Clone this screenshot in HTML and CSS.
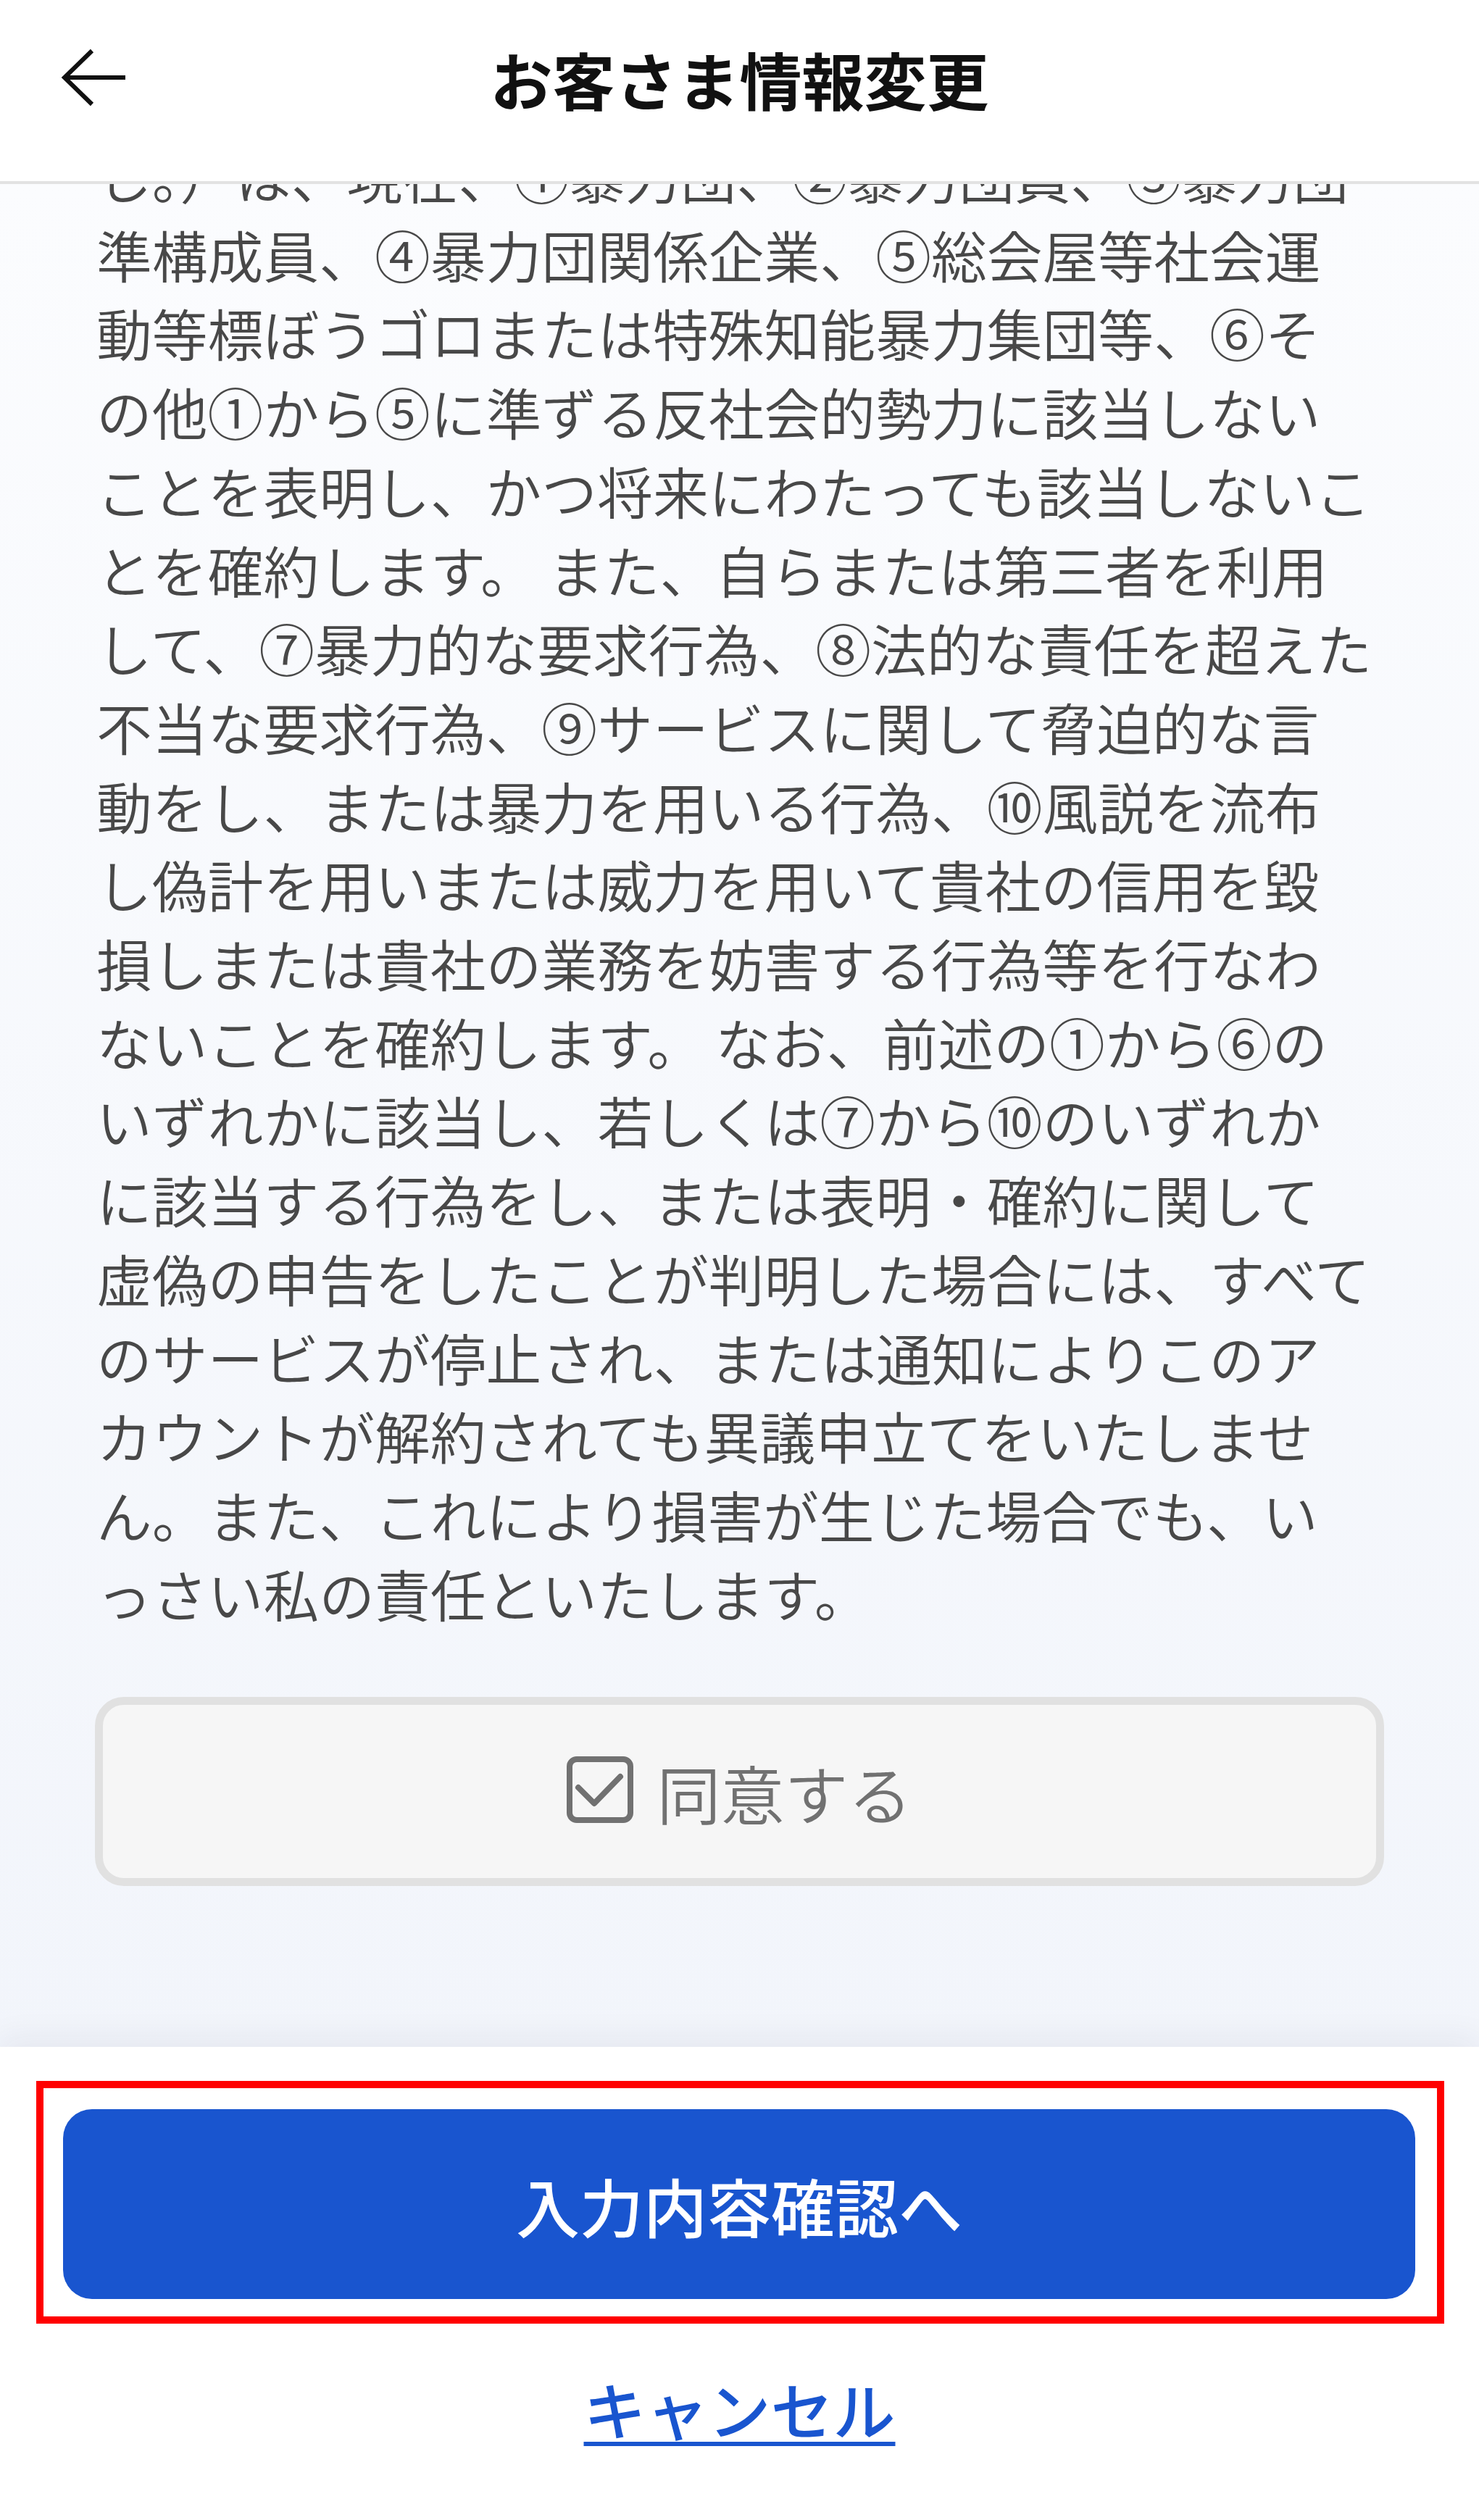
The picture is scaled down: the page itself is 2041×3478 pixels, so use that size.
FILE: index.html
```html
<!DOCTYPE html>
<html lang="ja">
<head>
  <meta charset="UTF-8" />
  <meta name="viewport" content="width=device-width, initial-scale=1" />
  <title>お客さま情報変更</title>
  <link rel="stylesheet" href="styles.css">
</head>
<body>
  <header class="app-header">
    <button class="back-btn" aria-label="戻る">
      <svg width="92" height="82" viewBox="0 0 92 82" fill="none" stroke="#111" stroke-width="6">
        <path d="M89 41H5" />
        <path d="M43 4L5 41L43 78" />
      </svg>
    </button>
    <h1 class="page-title">お客さま情報変更</h1>
  </header>

  <main class="content">
    <p class="terms">
      し。）は、現在、①暴力団、②暴力団員、③暴力団<br>
      準構成員、④暴力団関係企業、⑤総会屋等社会運<br>
      動等標ぼうゴロまたは特殊知能暴力集団等、⑥そ<br>
      の他①から⑤に準ずる反社会的勢力に該当しない<br>
      ことを表明し、かつ将来にわたっても該当しないこ<br>
      とを確約します。 また、自らまたは第三者を利用<br>
      して、⑦暴力的な要求行為、⑧法的な責任を超えた<br>
      不当な要求行為、⑨サービスに関して脅迫的な言<br>
      動をし、または暴力を用いる行為、⑩風説を流布<br>
      し偽計を用いまたは威力を用いて貴社の信用を毀<br>
      損しまたは貴社の業務を妨害する行為等を行なわ<br>
      ないことを確約します。 なお、前述の①から⑥の<br>
      いずれかに該当し、若しくは⑦から⑩のいずれか<br>
      に該当する行為をし、または表明・確約に関して<br>
      虚偽の申告をしたことが判明した場合には、すべて<br>
      のサービスが停止され、または通知によりこのア<br>
      カウントが解約されても異議申立てをいたしませ<br>
      ん。また、これにより損害が生じた場合でも、い<br>
      っさい私の責任といたします。
    </p>

    <label class="agree-box">
      <svg class="agree-icon" width="92" height="92" viewBox="0 0 92 92" fill="none" stroke="#717171" stroke-width="8">
        <rect x="4" y="4" width="84" height="84" rx="10" />
        <path d="M16 43L38 65L74 28" stroke-linecap="round" stroke-linejoin="round" />
      </svg>
      <span class="agree-text">同意する</span>
    </label>
  </main>

  <footer class="action-bar">
    <div class="highlight">
      <button class="btn-primary">入力内容確認へ</button>
    </div>
    <a class="cancel-link" href="#">キャンセル</a>
  </footer>
</body>
</html>
```

FILE: styles.css
```css
body {
  margin: 0;
  font-family: "Noto Sans CJK JP", "Noto Sans", sans-serif;
  background-color: #fff;
  color: #111;
}
/* Header */
.app-header {
  display: grid;
  grid-template-columns: 1fr auto 1fr;
  align-items: start;
  height: 254px;
  padding-top: 47px;
  box-sizing: border-box;
  background: #fff;
  border-bottom: 4px solid #e2e2e2;
}
.back-btn {
  justify-self: start;
  margin: 19px 0 0 84px;
  padding: 0;
  border: none;
  background: none;
  line-height: 0;
  cursor: pointer;
}
.page-title {
  margin: 0;
  font-size: 86px;
  font-weight: 700;
  line-height: 124px;
  color: #111;
  white-space: nowrap;
}
/* Scrolling content */
.content {
  overflow: hidden;
  padding: 0 131px 222px;
  background: linear-gradient(180deg, #fbfcfe 0%, #f2f5fb 100%);
}
.terms {
  margin: -66px 0 0 2px;
  font-size: 76.8px;
  font-weight: 350;
  line-height: 108.7px;
  color: #484848;
  white-space: nowrap;
}
.agree-box {
  display: flex;
  align-items: center;
  justify-content: center;
  gap: 32px;
  height: 261px;
  margin-top: 89px;
  box-sizing: border-box;
  background: #f6f6f6;
  border: 11px solid #e1e1e1;
  border-radius: 40px;
  cursor: pointer;
}
.agree-icon {
  flex: none;
  margin-top: -6px;
}
.agree-text {
  font-size: 88px;
  font-weight: 350;
  color: #717171;
  line-height: 1;
}
/* Bottom actions */
.action-bar {
  position: relative;
  background: #fff;
  padding-top: 47px;
  box-shadow: 0 -14px 40px rgba(30, 40, 60, 0.06);
  text-align: center;
}
.highlight {
  margin: 0 48px 0 50px;
  padding: 29px 30px 24px 27px;
  border: 10px solid #ff0000;
}
.btn-primary {
  display: flex;
  align-items: center;
  justify-content: center;
  width: 100%;
  height: 262px;
  border: none;
  border-radius: 40px;
  background-color: #1955cf;
  color: #fff;
  font-family: inherit;
  font-size: 88px;
  font-weight: 500;
  cursor: pointer;
}
.cancel-link {
  display: inline-block;
  margin-top: 55px;
  font-size: 86px;
  font-weight: 500;
  line-height: 124px;
  color: #1955cf;
  text-decoration: underline;
  text-decoration-thickness: 6px;
  text-underline-offset: 9px;
}
```
